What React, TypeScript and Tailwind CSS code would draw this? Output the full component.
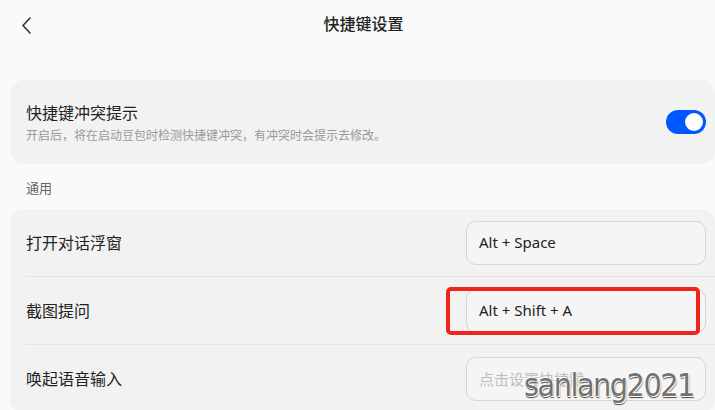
const rows = [
  { label: "打开对话浮窗", value: "Alt + Space" },
  { label: "截图提问", value: "Alt + Shift + A", marked: true },
  { label: "唤起语音输入", value: "" },
];

function Toggle() {
  return (
    <div className="w-10 h-6 rounded-full bg-[#0057ff] flex items-center justify-end pr-[3px] shrink-0">
      <div className="w-[18px] h-[18px] rounded-full bg-white" />
    </div>
  );
}

function ShortcutRow({ label, value, marked, last }: {
  label: string;
  value: string;
  marked?: boolean;
  last?: boolean;
}) {
  return (
    <div className={`relative ml-4 pr-[9px] h-[68px] flex items-center justify-between ${last ? "" : "border-b border-[#e3e3e3]"}`}>
      <span className="text-[16px] text-[#222]">{label}</span>
      <div className="w-[240px] h-[44px] rounded-[10px] border border-[#d4d4d4] bg-[#f5f5f5] px-3 flex items-center text-[15px]">
        {value ? (
          <span className="text-[#222]">{value}</span>
        ) : (
          <span className="text-[#bdbdbd]">点击设置快捷键</span>
        )}
      </div>
      {marked && (
        <div className="absolute left-[420px] top-[10px] w-[254px] h-[48px] border-4 border-[#f0241a] rounded-[5px]" />
      )}
    </div>
  );
}

export default function App() {
  return (
    <div
      className="relative w-[715px] h-[410px] overflow-hidden bg-[#fafafa]"
      style={{ fontFamily: '"Noto Sans", "Noto Sans CJK SC", sans-serif' }}
    >
      <header className="relative h-12 pl-3 flex items-center justify-center">
        <svg className="absolute left-[19px] top-[16px]" width="16" height="18" viewBox="0 0 16 18" fill="none">
          <polyline points="11,2 4,9.5 11,17" stroke="#333" strokeWidth="1.6" strokeLinecap="round" strokeLinejoin="round" />
        </svg>
        <h1 className="text-[16px] font-medium text-[#222]">快捷键设置</h1>
      </header>

      <section className="mt-8 ml-[10px] h-[84px] rounded-[14px] bg-[#f2f2f2] pl-4 pr-[9px] flex items-center justify-between">
        <div className="flex flex-col gap-[3px]">
          <span className="text-[16px] text-[#222] leading-6">快捷键冲突提示</span>
          <span className="text-[12px] text-[#9a9a9a] leading-4">开启后，将在启动豆包时检测快捷键冲突，有冲突时会提示去修改。</span>
        </div>
        <Toggle />
      </section>

      <div className="mt-[15px] mb-3 pl-[26px] text-[13px] leading-[18px] text-[#666]">通用</div>

      <section className="ml-[10px] rounded-[14px] bg-[#f2f2f2]">
        {rows.map((r, i) => (
          <ShortcutRow key={r.label} {...r} last={i === rows.length - 1} />
        ))}
      </section>

      <div
        className="absolute left-[524px] top-[365px] text-[32px] leading-10 tracking-[-1.5px] text-[#727272]"
        style={{ fontFamily: '"DejaVu Sans Condensed", "Liberation Sans Narrow", sans-serif', textShadow: "1px 1px 0 #fff, -1px -1px 0 #fff, 1px 2px 1px #444" }}
      >
        sanlang2021
      </div>
    </div>
  );
}
